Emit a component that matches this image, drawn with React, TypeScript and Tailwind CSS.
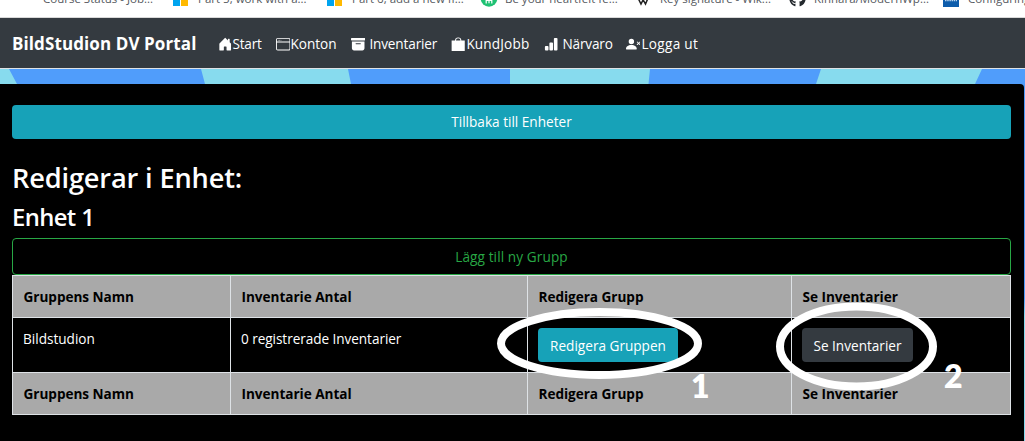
import React from "react";
import { BsHouseDoorFill, BsWindow, BsArchiveFill, BsBarChartFill, BsPersonXFill } from "react-icons/bs";
import { FaGithub } from "react-icons/fa";

function MicrosoftMark() {
  return (
    <span className="flex h-[6px] w-[15px] shrink-0 gap-px">
      <span className="h-full w-[7px] bg-[#00a4ef]" />
      <span className="h-full w-[7px] bg-[#ffb900]" />
    </span>
  );
}

function BagIcon() {
  return (
    <svg width="1em" height="1em" viewBox="0 0 16 16" fill="currentColor">
      <path d="M.7 4h14.600v11a1 1 0 0 1-1 1H1.700a1 1 0 0 1-1-1V4zm7.300-2.500A2.500 2.500 0 0 0 5.500 4h-1a3.500 3.500 0 1 1 7 0h-1A2.500 2.500 0 0 0 8 1.500z" />
    </svg>
  );
}

function Bookmark({ icon, label, className }: { icon?: React.ReactNode; label: string; className: string }) {
  return (
    <div className={`flex shrink-0 items-start ${className}`}>
      <div className="flex w-[25px] shrink-0">{icon}</div>
      <span className="-mt-[10px] text-[11.5px] leading-[18px] whitespace-nowrap text-[#55595e]">{label}</span>
    </div>
  );
}

function BookmarkBar() {
  return (
    <div className="flex h-[18px] overflow-hidden border-b border-[#d9d9d9] bg-white pl-[18px]">
      <Bookmark className="w-[155px]" label="Course Status - Job..." />
      <Bookmark className="w-[154px]" icon={<MicrosoftMark />} label="Part 5, work with a..." />
      <Bookmark className="w-[153px]" icon={<MicrosoftMark />} label="Part 6, add a new fi..." />
      <Bookmark
        className="w-[155px]"
        icon={
          <svg width="18" height="8" viewBox="0 0 18 8">
            <circle cx="9" cy="-1.5" r="8.3" fill="#1fc173" />
            <path d="M6.2 0v3.600M9 0v3.200M11.800 0v3.600M6.200 .3h5.600" stroke="#fff" strokeWidth="1.2" fill="none" />
          </svg>
        }
        label="Be your heartfelt fe..."
      />
      <Bookmark
        className="w-[154px]"
        icon={
          <svg width="16" height="8" viewBox="0 0 16 8">
            <path d="M2.5 -3L6 4L9 -2M6.5 -3L10.5 4L13.5 -3" stroke="#222" strokeWidth="1.5" fill="none" />
          </svg>
        }
        label="Key signature - Wik..."
      />
      <Bookmark
        className="w-[154px]"
        icon={<FaGithub className="-mt-[10px] text-[17px] text-[#24292e]" />}
        label="Kinnara/ModernWp..."
      />
      <Bookmark
        className="w-[120px]"
        icon={
          <svg width="16" height="8" viewBox="0 0 16 8">
            <rect width="16" height="7" fill="#0d5cab" />
            <path d="M2 .6h12" stroke="#b9d4ee" strokeWidth="1.2" strokeDasharray="1.5 .7" />
          </svg>
        }
        label="Configuring"
      />
    </div>
  );
}

const navItems = [
  { icon: <BsHouseDoorFill />, label: "Start", box: "w-[58px]", text: "tracking-[-0.2px]" },
  { icon: <BsWindow />, label: "Konton", box: "w-[75px]", text: "" },
  { icon: <BsArchiveFill />, label: "Inventarier", box: "w-[100px]", text: "ml-[4px] tracking-[-0.15px]" },
  { icon: <BagIcon />, label: "KundJobb", box: "w-[93px]", text: "ml-px tracking-[0.15px]" },
  { icon: <BsBarChartFill />, label: "Närvaro", box: "w-[82px]", text: "ml-[4px] tracking-[-0.15px]" },
  { icon: <BsPersonXFill />, label: "Logga ut", box: "w-[90px]", text: "ml-px tracking-[0.3px]" },
];

function NavBar() {
  return (
    <nav className="flex h-[51px] items-center border-b border-[#dee2e6] bg-[#343a40] pt-[2px] pl-3 text-white">
      <span className="w-[206px] text-[17px] font-bold tracking-[0.1px] whitespace-nowrap">BildStudion DV Portal</span>
      {navItems.map((item) => (
        <a key={item.label} className={`flex shrink-0 items-center text-[13.6px] whitespace-nowrap ${item.box}`}>
          <span className="shrink-0 text-[14.4px]">{item.icon}</span>
          <span className={item.text}>{item.label}</span>
        </a>
      ))}
    </nav>
  );
}

function HeadingRow() {
  return (
    <tr className="h-[42px] bg-[#a9a9a9] text-left font-bold text-black">
      {["Gruppens Namn", "Inventarie Antal", "Redigera Grupp", "Se Inventarier"].map((t) => (
        <th key={t} className="border border-[#dee2e6] pt-[2px] pr-[10px] pb-0 pl-[10.5px] align-middle tracking-[-0.04px]">{t}</th>
      ))}
    </tr>
  );
}

export default function App() {
  return (
    <div className="relative h-[441px] w-[1025px] overflow-hidden bg-[#509dfb] font-['Open_Sans','Noto_Sans',sans-serif] text-[13.6px] text-white">
      <BookmarkBar />
      <NavBar />
      <svg className="block" width="1025" height="15" viewBox="0 0 1025 15">
        <rect width="1025" height="15" fill="#509dfb" />
        <path d="M0 0H9L17 15H0zM201 0H348L351 15H205zM510 0H650L648.500 15H510zM821 0H982L975 15H816z" fill="#87dbee" />
      </svg>
      <div className="flex h-[357px] bg-linear-to-b from-[#509dfb] from-60% to-[#87dbee] to-65%">
        <main className="h-[357px] w-[1024px] rounded-tr bg-black pt-[21px] pr-[13px] pl-3">
          <button className="block h-[34px] w-full rounded bg-[#17a2b8] pt-px text-center">Tillbaka till Enheter</button>
          <h2 className="mt-[21px] h-[36px] text-[27.2px] leading-[35px] font-semibold tracking-[-0.15px]">Redigerar i Enhet:</h2>
          <h3 className="mt-[6px] h-[31px] text-[23.8px] leading-[30px] font-semibold tracking-[-0.6px]">Enhet 1</h3>
          <button className="mt-[5px] block h-[37px] w-full rounded border border-[#28a745] pt-[2px] text-center tracking-[0.1px] text-[#28a745]">
            Lägg till ny Grupp
          </button>
          <table className="w-[999px] table-fixed border-collapse">
            <colgroup>
              <col className="w-[218px]" />
              <col className="w-[297px]" />
              <col className="w-[264px]" />
              <col className="w-[219px]" />
            </colgroup>
            <thead><HeadingRow /></thead>
            <tbody>
              <tr className="h-[55px]">
                <td className="border border-[#dee2e6] px-[10px] pt-[11px] align-top">Bildstudion</td>
                <td className="border border-[#dee2e6] px-[10px] pt-[11px] align-top tracking-[-0.06px]">0 registrerade Inventarier</td>
                <td className="border border-[#dee2e6] px-[10px] align-middle">
                  <button className="block h-[34px] w-[140px] rounded bg-[#17a2b8] pt-[2px]">Redigera Gruppen</button>
                </td>
                <td className="border border-[#dee2e6] px-[10px] align-middle">
                  <button className="block h-[34px] w-[111px] rounded bg-[#343a40] pt-[2px]">Se Inventarier</button>
                </td>
              </tr>
            </tbody>
            <tfoot><HeadingRow /></tfoot>
          </table>
        </main>
      </div>
      <svg className="absolute inset-0" width="1025" height="441" fill="none" stroke="#fff" strokeWidth="8">
        <ellipse cx="599.5" cy="343.500" rx="98.500" ry="31.500" />
        <ellipse cx="856.500" cy="346.500" rx="76.500" ry="40" />
      </svg>
      <span className="absolute top-[364px] left-[691px] font-[Lato,sans-serif] text-[32px] leading-[44px] font-extrabold">1</span>
      <span className="absolute top-[354px] left-[944px] font-[Lato,sans-serif] text-[32px] leading-[44px] font-extrabold">2</span>
    </div>
  );
}
